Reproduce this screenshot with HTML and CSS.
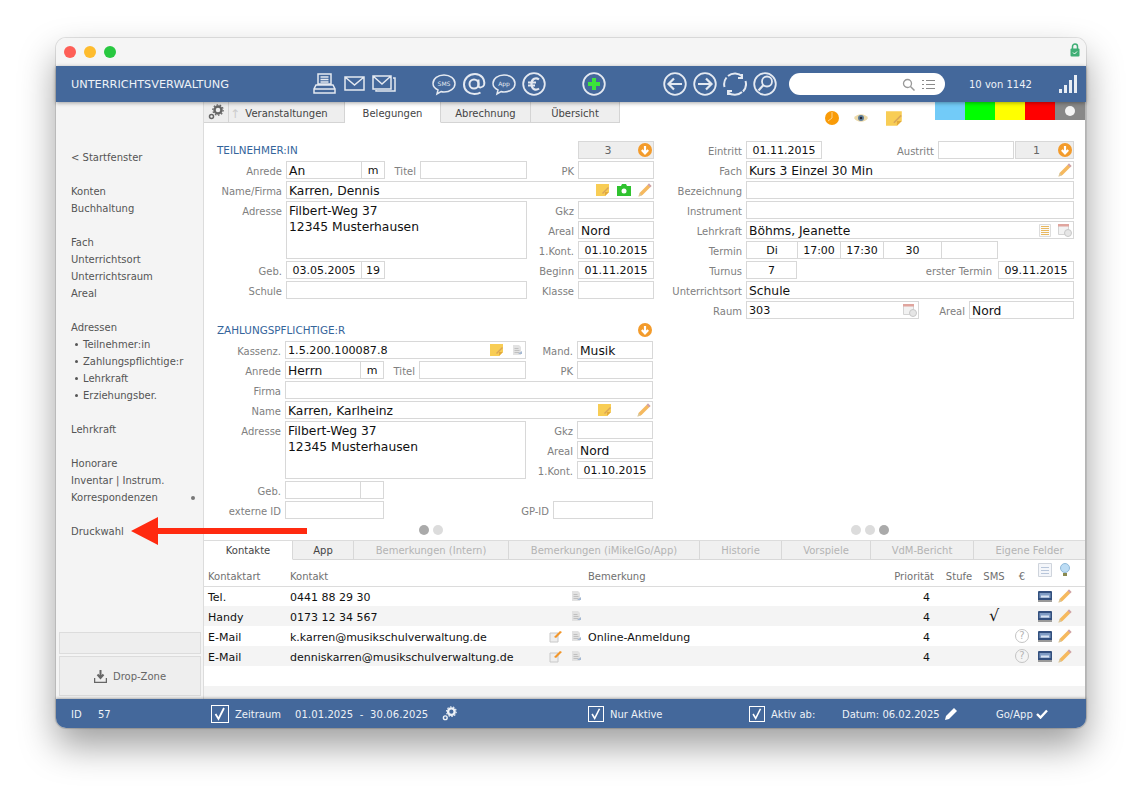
FILE: index.html
```html
<!DOCTYPE html>
<html lang="de">
<head>
    <meta charset="UTF-8">
    <title>Unterrichtsverwaltung</title>
    <link rel="stylesheet" href="styles.css">
</head>
<body>
    <svg class="defs" width="0" height="0">
        <symbol id="pencil" viewBox="0 0 14 14">
            <path d="M11 0.500l2.500 2.500-9 9-4 1.500 1.500-4z" fill="#f5b95f"/>
            <path d="M11 0.500l2.500 2.500-1.300 1.300-2.500-2.500z" fill="#c9a0b8"/>
            <path d="M1.500 10l2.500 2.500-3.500 1z" fill="#d8c8a0"/>
        </symbol>
        <symbol id="note" viewBox="0 0 14 14">
            <path d="M0 1h13v8l-4 4H0z" fill="#f8cd55"/>
            <path d="M13 9l-4 4V9z" fill="#e3a93a"/>
            <path d="M6 10l6-6 1 1-6 6z" fill="#d9a658"/>
        </symbol>
        <symbol id="doc" viewBox="0 0 11 11">
            <path d="M1 0h6l2 2v8H1z" fill="#e2e2e2"/>
            <path d="M2.500 3.500h4M2.500 5.500h5M2.500 7.500h5" stroke="#c0c0c0"/>
            <path d="M6 9l4-3v3z" fill="#a4b8d2"/>
        </symbol>
        <symbol id="pen-box" viewBox="0 0 13 13">
            <path d="M1 3h8v9H1z" fill="#eee" stroke="#c8c8c8"/>
            <path d="M5 7l6-6 2 1-6 6z" fill="#f2962a"/>
        </symbol>
        <symbol id="monitor" viewBox="0 0 14 11">
            <rect x="0" y="0" width="14" height="10" rx="1" fill="#33507e"/>
            <path d="M1.500 2h11v5h-11z" fill="#7f9cc4"/>
            <path d="M3 4.500h8v2H3z" fill="#d9e4f2"/>
            <path d="M0 9h14v2H0z" fill="#9a9a9a"/>
        </symbol>
        <symbol id="calendar" viewBox="0 0 14 14">
            <path d="M0.500 1.500h10v10h-10z" fill="#f2f2f2" stroke="#d4d4d4"/>
            <path d="M0 1h11v2.500H0z" fill="#e0a59e"/>
            <circle cx="10" cy="10" r="3.500" fill="#e6e6e6" stroke="#c8c8c8"/>
        </symbol>
        <symbol id="arrow-down" viewBox="0 0 14 14">
            <circle cx="7" cy="7" r="7" fill="#f39b2b"/>
            <path d="M7 3v7M3.800 7L7 10.300 10.200 7" fill="none" stroke="#fff" stroke-width="2.200"/>
        </symbol>
        <symbol id="gear" viewBox="0 0 16 16">
            <circle cx="10" cy="6" r="3.500" fill="none" stroke="currentColor" stroke-width="2.500"/>
            <circle cx="10" cy="6" r="5.200" fill="none" stroke="currentColor" stroke-width="1.200" stroke-dasharray="1.600 1.600"/>
            <circle cx="3.500" cy="12.500" r="2" fill="none" stroke="currentColor" stroke-width="1.500"/>
        </symbol>
    </svg>

    <div class="window">
        <div class="titlebar">
            <span class="light red"></span>
            <span class="light yellow"></span>
            <span class="light green"></span>
            <svg class="lock" width="10" height="14" viewBox="0 0 10 14">
                <path d="M2.500 6V3.500a2.500 2.500 0 0 1 5 0V6" fill="none" stroke="#3fae75" stroke-width="1.500"/>
                <rect x="0.500" y="5.500" width="9" height="8" rx="1" fill="#3fae75"/>
                <path d="M3 9.500l1.500 1.500L7 8.500" fill="none" stroke="#fff"/>
            </svg>
        </div>

        <div class="topbar">
            <div class="app-title">UNTERRICHTSVERWALTUNG</div>
            <div class="tools">
                <svg viewBox="0 0 24 24"><path d="M6 2h13v10H6zM8.500 5h8M8.500 7.500h8M8.500 10h8M4 13h17l2 4v4H2v-4zM2 17h21"/></svg>
                <svg viewBox="0 0 24 24"><path d="M3 5h19v13H3zM3 5l9.500 8L22 5"/></svg>
                <svg viewBox="0 0 24 24"><path d="M1 4h18v13H1zM1 4l9 8 9-8M21 6h2v13H4v-1"/></svg>
            </div>
            <div class="tools gap36">
                <svg viewBox="0 0 24 24"><path d="M12 3c6 0 11 3.500 11 8.500S18 20 12 20c-1 0-2 0-3-.5L5 22l1-4c-3-1.500-5-3.500-5-6.500C1 6.500 6 3 12 3z"/><text x="12" y="14" text-anchor="middle" class="bubble-text">SMS</text></svg>
                <svg viewBox="0 0 24 24"><circle class="thick" cx="12" cy="12" r="4.500"/><path class="thick" d="M16.500 7.500V14c0 2 4.500 2 5.500-1 1.500-6-3-11-9-11C7 2 2 6.500 2 12.500S7 22 12.500 22c2.500 0 4.500-.5 6-1.500"/></svg>
                <svg viewBox="0 0 24 24"><path d="M12 3c6 0 11 3.500 11 8.500S18 20 12 20c-1 0-2 0-3-.5L5 22l1-4c-3-1.500-5-3.500-5-6.500C1 6.500 6 3 12 3z"/><text x="12" y="14" text-anchor="middle" class="bubble-text">App</text></svg>
                <svg viewBox="0 0 24 24"><circle cx="12" cy="12" r="10.800"/><path class="heavy" d="M17 7.500c-3-2.500-7.500-1-7.500 4.500s4.500 7 7.500 4.500M6 10.500h8M6 13.500h7"/></svg>
            </div>
            <div class="tools gap36">
                <svg viewBox="0 0 24 24"><circle cx="12" cy="12" r="10.800"/><path d="M12 6v12M6 12h12" class="plus"/></svg>
            </div>
            <div class="tools gap57">
                <svg viewBox="0 0 24 24"><circle cx="12" cy="12" r="10.800"/><path class="heavy" d="M19 12H6M11 6.500L5.500 12l5.500 5.500"/></svg>
                <svg viewBox="0 0 24 24"><circle cx="12" cy="12" r="10.800"/><path class="heavy" d="M5 12h13M13 6.500l5.500 5.500-5.500 5.500"/></svg>
                <svg viewBox="0 0 24 24"><path class="thick" d="M5 4a10.800 10.800 0 0 1 14.500.5M19 2v4h-4M22.500 9a10.800 10.800 0 0 1-2.500 10.500M19 20a10.800 10.800 0 0 1-14 .5M5 23v-4h4M1.500 15A10.800 10.800 0 0 1 3.500 5.500"/></svg>
                <svg viewBox="0 0 24 24"><circle cx="12" cy="12" r="10.800"/><circle cx="14" cy="9.500" r="5"/><path class="heavy" d="M10.500 13L5.500 18.500"/></svg>
            </div>
            <div class="search">
                <svg width="13" height="13" viewBox="0 0 13 13"><circle cx="5.500" cy="5.500" r="4" fill="none" stroke="#999" stroke-width="1.300"/><path d="M8.500 8.500l4 4" stroke="#999" stroke-width="1.500"/></svg>
                <svg width="13" height="11" viewBox="0 0 13 11"><path d="M0 1.500h2M4 1.500h9M0 5.500h2M4 5.500h9M0 9.500h2M4 9.500h9" stroke="#8a8a8a"/></svg>
            </div>
            <div class="counter">10 von 1142</div>
            <svg class="signal" width="18" height="18" viewBox="0 0 18 18">
                <path d="M0 14h3v4H0zM5 10h3v8H5zM10 5h3v13h-3zM15 0h3v18h-3z" fill="#e8edf4"/>
            </svg>
        </div>

        <div class="content">
            <div class="sidebar">
                <div class="nav">
                    <div class="nav-group">&lt; Startfenster</div>
                    <div class="nav-group">
                        <div>Konten</div>
                        <div>Buchhaltung</div>
                    </div>
                    <div class="nav-group">
                        <div>Fach</div>
                        <div>Unterrichtsort</div>
                        <div>Unterrichtsraum</div>
                        <div>Areal</div>
                    </div>
                    <div class="nav-group">
                        <div>Adressen</div>
                        <div class="sub">Teilnehmer:in</div>
                        <div class="sub">Zahlungspflichtige:r</div>
                        <div class="sub">Lehrkraft</div>
                        <div class="sub">Erziehungsber.</div>
                    </div>
                    <div class="nav-group">Lehrkraft</div>
                    <div class="nav-group">
                        <div>Honorare</div>
                        <div>Inventar | Instrum.</div>
                        <div class="with-dot">Korrespondenzen<span class="nav-dot"></span></div>
                    </div>
                    <div class="nav-group">Druckwahl</div>
                </div>
                <div class="side-box"></div>
                <div class="drop-zone">
                    <svg width="13" height="13" viewBox="0 0 13 13"><path d="M6.500 0v7M3.500 4.500l3 3.500 3-3.500" fill="none" stroke="#666" stroke-width="2"/><path d="M0.500 8v4.500h12V8" fill="none" stroke="#666" stroke-width="1.500"/></svg>
                    Drop-Zone
                </div>
            </div>

            <div class="main">
                <div class="tabbar">
                    <div class="tab tab-gear"><svg width="16" height="16"><use href="#gear"/></svg></div>
                    <div class="tab tab-veranst"><span class="faint-arrow">↑</span>Veranstaltungen</div>
                    <div class="tab tab-active tab-beleg">Belegungen</div>
                    <div class="tab tab-abr">Abrechnung</div>
                    <div class="tab tab-uebers">Übersicht</div>
                    <div class="status-icons">
                        <svg width="14" height="14" viewBox="0 0 14 14"><circle cx="7" cy="7" r="7" fill="#f99b08"/><path d="M7 1v6L3 10" fill="none" stroke="#fde0ad" stroke-width="0.800"/></svg>
                        <svg class="eye" width="14" height="10" viewBox="0 0 14 10"><path d="M0 5c3-5 11-5 14 0-3 5-11 5-14 0z" fill="#ecd9a8"/><circle cx="7" cy="5" r="3" fill="#5f7f9a"/><circle cx="7" cy="5" r="1.300" fill="#223"/></svg>
                        <svg class="big-note" width="17" height="17"><use href="#note"/></svg>
                    </div>
                    <div class="swatches">
                        <span class="swatch sw-blue"></span>
                        <span class="swatch sw-green"></span>
                        <span class="swatch sw-yellow"></span>
                        <span class="swatch sw-red"></span>
                        <span class="swatch sw-grey"><i></i></span>
                    </div>
                </div>

                <div class="form">
                    <div class="col-left">
                        <div class="row">
                            <div class="section">TEILNEHMER:IN</div>
                            <div class="f grey w76 ctr push">3<svg class="f-arrow" width="14" height="14"><use href="#arrow-down"/></svg></div>
                        </div>
                        <div class="row">
                            <div class="lbl l81">Anrede</div>
                            <div class="f w76">An</div>
                            <div class="f w25 join ctr">m</div>
                            <div class="lbl l35">Titel</div>
                            <div class="f w107"></div>
                            <div class="lbl l51">PK</div>
                            <div class="f w76"></div>
                        </div>
                        <div class="row">
                            <div class="lbl l81">Name/Firma</div>
                            <div class="f w368">Karren, Dennis
                                <div class="f-icons">
                                    <svg width="14" height="14"><use href="#note"/></svg>
                                    <svg width="14" height="12" viewBox="0 0 14 12"><path d="M0 2h4l1-2h4l1 2h4v10H0z" fill="#2fc22f"/><circle cx="7" cy="7" r="2.500" fill="#fff"/></svg>
                                    <svg width="14" height="14"><use href="#pencil"/></svg>
                                </div>
                            </div>
                        </div>
                        <div class="addr">
                            <div class="lbl l81">Adresse</div>
                            <div class="f w241 area">Filbert-Weg 37<br>12345 Musterhausen</div>
                            <div class="addr-side">
                                <div class="row"><div class="lbl l51">Gkz</div><div class="f w76"></div></div>
                                <div class="row"><div class="lbl l51">Areal</div><div class="f w76">Nord</div></div>
                                <div class="row"><div class="lbl l51">1.Kont.</div><div class="f w76 ctr">01.10.2015</div></div>
                            </div>
                        </div>
                        <div class="row">
                            <div class="lbl l81">Geb.</div>
                            <div class="f w76 ctr">03.05.2005</div>
                            <div class="f w25 join ctr">19</div>
                            <div class="lbl l193">Beginn</div>
                            <div class="f w76 ctr">01.11.2015</div>
                        </div>
                        <div class="row">
                            <div class="lbl l81">Schule</div>
                            <div class="f w241"></div>
                            <div class="lbl l51">Klasse</div>
                            <div class="f w76"></div>
                        </div>

                        <div class="payer">
                            <div class="row">
                                <div class="section">ZAHLUNGSPFLICHTIGE:R</div>
                                <svg class="sec-arrow" width="14" height="14"><use href="#arrow-down"/></svg>
                            </div>
                            <div class="row">
                                <div class="lbl l81">Kassenz.</div>
                                <div class="f w241 text11">1.5.200.100087.8
                                    <div class="f-icons pr3">
                                        <svg width="14" height="14"><use href="#note"/></svg>
                                        <svg width="11" height="11"><use href="#doc"/></svg>
                                    </div>
                                </div>
                                <div class="lbl l51">Mand.</div>
                                <div class="f w76">Musik</div>
                            </div>
                            <div class="row">
                                <div class="lbl l81">Anrede</div>
                                <div class="f w76">Herrn</div>
                                <div class="f w25 join ctr">m</div>
                                <div class="lbl l35">Titel</div>
                                <div class="f w107"></div>
                                <div class="lbl l51">PK</div>
                                <div class="f w76"></div>
                            </div>
                            <div class="row">
                                <div class="lbl l81">Firma</div>
                                <div class="f w368"></div>
                            </div>
                            <div class="row">
                                <div class="lbl l81">Name</div>
                                <div class="f w368">Karren, Karlheinz
                                    <div class="f-icons wide">
                                        <svg width="14" height="14"><use href="#note"/></svg>
                                        <svg width="14" height="14"><use href="#pencil"/></svg>
                                    </div>
                                </div>
                            </div>
                            <div class="addr">
                                <div class="lbl l81">Adresse</div>
                                <div class="f w241 area">Filbert-Weg 37<br>12345 Musterhausen</div>
                                <div class="addr-side">
                                    <div class="row"><div class="lbl l51">Gkz</div><div class="f w76"></div></div>
                                    <div class="row"><div class="lbl l51">Areal</div><div class="f w76">Nord</div></div>
                                    <div class="row"><div class="lbl l51">1.Kont.</div><div class="f w76 ctr">01.10.2015</div></div>
                                </div>
                            </div>
                            <div class="row">
                                <div class="lbl l81">Geb.</div>
                                <div class="f w76"></div>
                                <div class="f w25 join"></div>
                            </div>
                            <div class="row">
                                <div class="lbl l81">externe ID</div>
                                <div class="f w99"></div>
                                <div class="lbl l169">GP-ID</div>
                                <div class="f w100"></div>
                            </div>
                        </div>
                        <div class="dots"><span class="dot on"></span><span class="dot"></span></div>
                    </div>

                    <div class="col-right">
                        <div class="row">
                            <div class="lbl l86">Eintritt</div>
                            <div class="f w76 ctr">01.11.2015</div>
                            <div class="lbl l116">Austritt</div>
                            <div class="f w76"></div>
                            <div class="f grey w59 ctr next">1<svg class="f-arrow" width="14" height="14"><use href="#arrow-down"/></svg></div>
                        </div>
                        <div class="row">
                            <div class="lbl l86">Fach</div>
                            <div class="f w328">Kurs 3 Einzel 30 Min
                                <div class="f-icons"><svg width="14" height="14"><use href="#pencil"/></svg></div>
                            </div>
                        </div>
                        <div class="row"><div class="lbl l86">Bezeichnung</div><div class="f w328"></div></div>
                        <div class="row"><div class="lbl l86">Instrument</div><div class="f w328"></div></div>
                        <div class="row">
                            <div class="lbl l86">Lehrkraft</div>
                            <div class="f w328">Böhms, Jeanette
                                <div class="f-icons">
                                    <svg width="12" height="13" viewBox="0 0 12 13"><path d="M0.500 0.500h11v12H0.500z" fill="#fafafa" stroke="#ddd"/><path d="M2 2.500h8M2 4.500h8M2 6.500h8M2 8.500h8M2 10.500h8" stroke="#e8b860"/></svg>
                                    <svg width="14" height="14"><use href="#calendar"/></svg>
                                </div>
                            </div>
                        </div>
                        <div class="row">
                            <div class="lbl l86">Termin</div>
                            <div class="f w52 ctr">Di</div>
                            <div class="f w44 join ctr">17:00</div>
                            <div class="f w44 join ctr">17:30</div>
                            <div class="f w59 join ctr">30</div>
                            <div class="f w57 join"></div>
                        </div>
                        <div class="row">
                            <div class="lbl l86">Turnus</div>
                            <div class="f w51 ctr">7</div>
                            <div class="lbl l201">erster Termin</div>
                            <div class="f w76 ctr">09.11.2015</div>
                        </div>
                        <div class="row"><div class="lbl l86">Unterrichtsort</div><div class="f w328">Schule</div></div>
                        <div class="row">
                            <div class="lbl l86">Raum</div>
                            <div class="f w173 text11">303
                                <div class="f-icons"><svg width="14" height="14"><use href="#calendar"/></svg></div>
                            </div>
                            <div class="lbl l50">Areal</div>
                            <div class="f w105">Nord</div>
                        </div>
                        <div class="dots dots-right"><span class="dot"></span><span class="dot"></span><span class="dot on"></span></div>
                    </div>
                </div>

                <div class="lower-tabs">
                    <div class="ltab lt-active lt1">Kontakte</div>
                    <div class="ltab lt2">App</div>
                    <div class="ltab off lt3">Bemerkungen (Intern)</div>
                    <div class="ltab off lt4">Bemerkungen (iMikelGo/App)</div>
                    <div class="ltab off lt5">Historie</div>
                    <div class="ltab off lt6">Vorspiele</div>
                    <div class="ltab off lt7">VdM-Bericht</div>
                    <div class="ltab off lt8">Eigene Felder</div>
                </div>

                <table class="contacts">
                    <colgroup>
                        <col class="c-art"><col class="c-kontakt"><col class="c-i1"><col class="c-i2"><col class="c-bem">
                        <col class="c-prio"><col class="c-stufe"><col class="c-sms"><col class="c-eur"><col class="c-mon"><col class="c-pen">
                    </colgroup>
                    <thead>
                        <tr>
                            <th>Kontaktart</th><th>Kontakt</th><th></th><th></th><th>Bemerkung</th>
                            <th class="num">Priorität</th><th class="mid stufe">Stufe</th><th class="mid">SMS</th><th class="mid">€</th>
                            <th class="mid top"><svg width="14" height="14" viewBox="0 0 14 14"><path d="M0.500 0.500h13v13h-13z" fill="#f4f6fa" stroke="#cfd4dc"/><path d="M3 4.500h8M3 7.500h8M3 10.500h8" stroke="#b8c6da"/></svg></th>
                            <th class="mid top"><svg width="10" height="14" viewBox="0 0 10 14"><circle cx="5" cy="5" r="4.500" fill="#bcdcf4" stroke="#8fb8d8"/><path d="M3 10h4v3H3z" fill="#8a8a50"/></svg></th>
                        </tr>
                    </thead>
                    <tbody>
                        <tr>
                            <td>Tel.</td><td>0441 88 29 30</td><td></td>
                            <td class="mid"><svg width="11" height="11"><use href="#doc"/></svg></td><td></td>
                            <td class="num">4</td><td></td><td></td><td></td>
                            <td class="mid"><svg width="14" height="11"><use href="#monitor"/></svg></td>
                            <td class="mid"><svg width="14" height="14"><use href="#pencil"/></svg></td>
                        </tr>
                        <tr>
                            <td>Handy</td><td>0173 12 34 567</td><td></td>
                            <td class="mid"><svg width="11" height="11"><use href="#doc"/></svg></td><td></td>
                            <td class="num">4</td><td></td><td class="mid check">√</td><td></td>
                            <td class="mid"><svg width="14" height="11"><use href="#monitor"/></svg></td>
                            <td class="mid"><svg width="14" height="14"><use href="#pencil"/></svg></td>
                        </tr>
                        <tr>
                            <td>E-Mail</td><td>k.karren@musikschulverwaltung.de</td>
                            <td class="mid"><svg width="13" height="13"><use href="#pen-box"/></svg></td>
                            <td class="mid"><svg width="11" height="11"><use href="#doc"/></svg></td><td>Online-Anmeldung</td>
                            <td class="num">4</td><td></td><td></td>
                            <td class="mid"><span class="help">?</span></td>
                            <td class="mid"><svg width="14" height="11"><use href="#monitor"/></svg></td>
                            <td class="mid"><svg width="14" height="14"><use href="#pencil"/></svg></td>
                        </tr>
                        <tr>
                            <td>E-Mail</td><td>denniskarren@musikschulverwaltung.de</td>
                            <td class="mid"><svg width="13" height="13"><use href="#pen-box"/></svg></td>
                            <td class="mid"><svg width="11" height="11"><use href="#doc"/></svg></td><td></td>
                            <td class="num">4</td><td></td><td></td>
                            <td class="mid"><span class="help">?</span></td>
                            <td class="mid"><svg width="14" height="11"><use href="#monitor"/></svg></td>
                            <td class="mid"><svg width="14" height="14"><use href="#pencil"/></svg></td>
                        </tr>
                        <tr><td colspan="11"></td></tr>
                    </tbody>
                </table>
                <div class="table-rest"></div>
            </div>

            <svg class="red-arrow" width="176" height="30" viewBox="0 0 176 30">
                <path d="M0 15L27 1v11h149v6H27v11z" fill="#ff2a10"/>
            </svg>
        </div>

        <div class="footer">
            <span class="ft-id">ID</span>
            <span class="ft-idval">57</span>
            <span class="box box-large"><svg viewBox="0 0 16 16"><path d="M3.500 8l3 5L12 2" fill="none" stroke="#fff" stroke-width="1.800"/></svg></span>
            <span class="ft-zeitraum">Zeitraum</span>
            <span class="ft-dates">01.01.2025&nbsp; - &nbsp;30.06.2025</span>
            <svg class="ft-gear" width="15" height="15"><use href="#gear"/></svg>
            <span class="box ft-box2"><svg viewBox="0 0 16 16"><path d="M3.500 8l3 5L12 2" fill="none" stroke="#fff" stroke-width="1.800"/></svg></span>
            <span class="ft-aktive">Nur Aktive</span>
            <span class="box ft-box3"><svg viewBox="0 0 16 16"><path d="M3.500 8l3 5L12 2" fill="none" stroke="#fff" stroke-width="1.800"/></svg></span>
            <span class="ft-abl">Aktiv ab:</span>
            <span class="ft-datum">Datum: 06.02.2025</span>
            <svg class="ft-pen" width="12" height="12" viewBox="0 0 12 12"><path d="M9 0l3 3-8 8-4 1 1-4z" fill="#fff"/></svg>
            <span class="ft-go">Go/App</span>
            <svg class="ft-ok" width="12" height="10" viewBox="0 0 12 10"><path d="M1 5l3.500 3.500L11 1.500" fill="none" stroke="#fff" stroke-width="2.400"/></svg>
        </div>
    </div>
</body>
</html>
```

FILE: styles.css
```css
* {
    box-sizing: border-box;
}

html, body {
    margin: 0;
    height: 100%;
}

body {
    background-color: #fff;
    padding: 38px 56px 0;
    font-family: "DejaVu Sans", Verdana, sans-serif;
    font-size: 10px;
    color: #555;
    overflow: hidden;
}

.defs {
    position: absolute;
}

.window {
    width: 1030px;
    height: 690px;
    display: flex;
    flex-direction: column;
    border-radius: 10px;
    background-color: #fff;
    box-shadow: 0 0 0 1px rgba(0, 0, 0, 0.1), 0 18px 36px rgba(0, 0, 0, 0.38);
}

/* title bar */
.titlebar {
    height: 28px;
    display: flex;
    align-items: center;
    gap: 8px;
    padding-left: 8px;
    padding-right: 6px;
    background-color: #f5f5f5;
    border-radius: 10px 10px 0 0;
}

.light {
    width: 12px;
    height: 12px;
    border-radius: 50%;
}

.red { background-color: #fe5f57; }
.yellow { background-color: #febc2e; }
.green { background-color: #28c840; }

.lock {
    margin-left: auto;
    margin-bottom: 5px;
}

/* blue bar */
.topbar {
    height: 36px;
    display: flex;
    align-items: center;
    background-color: #44689b;
    position: relative;
    z-index: 2;
    box-shadow: 0 1px 4px rgba(0, 0, 0, 0.35);
}

.app-title {
    width: 256px;
    padding-left: 15px;
    color: #eef2f7;
    font-size: 11.3px;
}

.tools {
    display: flex;
    gap: 6px;
}

.gap36 { margin-left: 36px; }
.gap57 { margin-left: 57px; }

.tools svg {
    width: 24px;
    height: 24px;
    fill: none;
    stroke: #e4e9f1;
    stroke-width: 1.500;
}

.tools svg circle { stroke-width: 1.800; }
.tools svg .thick { stroke-width: 2; }
.tools svg .heavy { stroke-width: 2.200; }
.tools svg .plus { stroke: #3be43b; stroke-width: 4; }

.bubble-text {
    font-size: 6px;
    fill: #e4e9f1;
    stroke: none;
    font-family: "DejaVu Sans", sans-serif;
}

.search {
    width: 156px;
    height: 22px;
    margin-left: 12px;
    display: flex;
    align-items: center;
    justify-content: flex-end;
    gap: 7px;
    padding-right: 10px;
    background-color: #fff;
    border-radius: 11px;
}

.counter {
    margin-left: 24px;
    color: #eef2f7;
    font-size: 10px;
}

.signal {
    margin-left: auto;
    margin-right: 9px;
}

/* content */
.content {
    flex: 1;
    display: flex;
    min-height: 0;
    position: relative;
}

.sidebar {
    width: 148px;
    flex-shrink: 0;
    display: flex;
    flex-direction: column;
    background-color: #f4f4f4;
    border-right: 1px solid #dcdcdc;
    padding: 47px 0 3px;
}

.nav {
    flex: 1;
    padding-left: 15px;
    line-height: 17px;
    color: #555;
}

.nav-group {
    margin-bottom: 17px;
}

.sub {
    padding-left: 12px;
    position: relative;
}

.sub::before {
    content: "";
    position: absolute;
    left: 4px;
    top: 7px;
    width: 3px;
    height: 3px;
    border-radius: 50%;
    background-color: #555;
}

.with-dot {
    display: flex;
    align-items: center;
}

.nav-dot {
    width: 4px;
    height: 4px;
    border-radius: 50%;
    background-color: #777;
    margin-left: auto;
    margin-right: 8px;
}

.side-box {
    height: 22px;
    margin: 0 2px 2px 3px;
    background-color: #eee;
    border: 1px solid #dcdcdc;
}

.drop-zone {
    height: 40px;
    margin: 0 2px 0 3px;
    display: flex;
    align-items: center;
    justify-content: center;
    gap: 6px;
    background-color: #eee;
    border: 1px solid #dcdcdc;
    color: #666;
}

.main {
    flex: 1;
    min-width: 0;
    display: flex;
    flex-direction: column;
    border-right: 1px solid #b4b4b4;
}

/* top tabs */
.tabbar {
    height: 21px;
    display: flex;
    flex-shrink: 0;
}

.tab {
    display: flex;
    align-items: center;
    justify-content: center;
    padding-top: 2px;
    background-color: #eee;
    border-right: 1px solid #d4d4d4;
    border-bottom: 1px solid #d4d4d4;
    color: #444;
}

.tab-gear { width: 25px; color: #666; padding-top: 0; }
.tab-veranst { width: 116px; position: relative; }
.tab-beleg { width: 96px; }
.tab-abr { width: 90px; }
.tab-uebers { width: 89px; }

.tab-active {
    background-color: #fff;
    border-bottom-color: #fff;
}

.faint-arrow {
    position: absolute;
    left: 1px;
    top: 5px;
    color: #ccc;
    font-size: 12px;
}

.status-icons {
    display: flex;
    align-items: flex-start;
    height: 21px;
    margin-left: 205px;
    padding-top: 9px;
}

.status-icons svg {
    flex-shrink: 0;
}

.eye {
    margin-left: 15px;
    margin-top: 2px;
}

.big-note {
    margin-left: 18px;
    margin-top: -1px;
}

.swatches {
    display: flex;
    height: 18px;
    margin-left: auto;
}

.swatch {
    width: 30px;
    display: flex;
    align-items: center;
    justify-content: center;
}

.sw-blue { background-color: #72cbf8; }
.sw-green { background-color: #00ff00; }
.sw-yellow { background-color: #ffff00; }
.sw-red { background-color: #ff0000; }
.sw-grey { background-color: #888; }

.swatch i {
    width: 10px;
    height: 10px;
    border-radius: 50%;
    background-color: #f4f4f4;
}

/* form */
.form {
    height: 417px;
    flex-shrink: 0;
    display: flex;
    padding: 18px 0 0 1px;
}

.col-left {
    width: 449px;
    margin-right: 6px;
    display: flex;
    flex-direction: column;
}

.col-right {
    width: 414px;
    display: flex;
    flex-direction: column;
}

.row {
    height: 18px;
    margin-bottom: 2px;
    display: flex;
    flex-shrink: 0;
}

.addr {
    height: 58px;
    margin-bottom: 2px;
    display: flex;
    flex-shrink: 0;
}

.addr-side {
    display: flex;
    flex-direction: column;
}

.section {
    padding-left: 12px;
    line-height: 18px;
    font-size: 10.4px;
    color: #35659b;
}

.payer .section {
    padding-left: 13px;
}

.lbl {
    flex-shrink: 0;
    text-align: right;
    padding-right: 4px;
    line-height: 22px;
    color: #808080;
    white-space: nowrap;
}

.l35 { width: 35px; }
.l50 { width: 50px; }
.l51 { width: 51px; }
.l81 { width: 81px; }
.l86 { width: 86px; }
.l116 { width: 116px; }
.l169 { width: 169px; }
.l193 { width: 193px; }
.l201 { width: 201px; padding-right: 6px; }

/* field box, dates and short values use the smaller size */
.f {
    flex-shrink: 0;
    height: 18px;
    display: flex;
    align-items: center;
    padding: 2px 0 0 2px;
    border: 1px solid #d8d8d8;
    background-color: #fff;
    color: #111;
    font-size: 12.3px;
    line-height: 14px;
    white-space: pre-line;
}

.area {
    height: 58px;
    display: block;
    line-height: 16px;
    padding-top: 1px;
}

.ctr {
    justify-content: center;
    padding-left: 0;
    font-size: 11px;
}

.text11 {
    font-size: 11.2px;
}

.join { margin-left: -1px; }
.next { margin-left: 1px; }
.push { margin-left: auto; }

.grey {
    background-color: #eee;
    color: #666;
    position: relative;
    padding-right: 16px;
}

.f-arrow {
    position: absolute;
    right: 1px;
    top: 1px;
}

.sec-arrow {
    margin-left: auto;
    margin-top: 2px;
    margin-right: 2px;
}

.w25 { width: 24px; }
.w44 { width: 44px; }
.w51 { width: 51px; }
.w52 { width: 52px; }
.w57 { width: 57px; }
.w59 { width: 59px; }
.w76 { width: 76px; }
.w99 { width: 99px; }
.w100 { width: 100px; }
.w105 { width: 105px; }
.w107 { width: 107px; }
.w173 { width: 173px; }
.w241 { width: 241px; }
.w328 { width: 328px; }
.w368 { width: 368px; }

.f-icons {
    margin-left: auto;
    margin-top: -2px;
    display: flex;
    align-items: center;
    gap: 7px;
    padding-right: 1px;
}

.pr3 {
    gap: 8px;
    padding-right: 2px;
}

.wide {
    gap: 25px;
    padding-right: 1px;
}

.payer {
    margin-left: -1px;
    margin-top: 20px;
}

.dots {
    margin-top: auto;
    margin-bottom: 5px;
    display: flex;
    justify-content: center;
    gap: 4px;
    padding-left: 3px;
}

.dots-right { padding-left: 6px; }

.dot {
    width: 10px;
    height: 10px;
    border-radius: 50%;
    background-color: #dcdcdc;
}

.dot.on {
    background-color: #aaa;
}

/* lower tabs */
.lower-tabs {
    height: 20px;
    flex-shrink: 0;
    display: flex;
    border-top: 1px solid #dcdcdc;
}

.ltab {
    display: flex;
    align-items: center;
    justify-content: center;
    background-color: #f0f0f0;
    border-right: 1px solid #d8d8d8;
    border-bottom: 1px solid #d8d8d8;
    color: #444;
}

.lt-active {
    background-color: #fff;
    border-bottom-color: #fff;
}

.off { color: #b4b4b4; }

.lt1 { width: 89px; }
.lt2 { width: 61px; }
.lt3 { width: 155px; }
.lt4 { width: 191px; }
.lt5 { width: 82px; }
.lt6 { width: 89px; }
.lt7 { width: 103px; }
.lt8 { flex: 1; border-right: none; }

/* contact table */
.contacts {
    width: 881px;
    table-layout: fixed;
    border-collapse: collapse;
    flex-shrink: 0;
}

.c-art { width: 86px; }
.c-kontakt { width: 255px; }
.c-i1 { width: 20px; }
.c-i2 { width: 23px; }
.c-bem { width: 294px; }
.c-prio { width: 52px; }
.c-stufe { width: 44px; }
.c-sms { width: 32px; }
.c-eur { width: 24px; }
.c-mon { width: 22px; }
.c-pen { width: 29px; }

.contacts th {
    height: 26px;
    padding: 7px 0 0 0;
    font-weight: normal;
    text-align: left;
    color: #707070;
    border-bottom: 1px solid #dcdcdc;
    white-space: nowrap;
}

.contacts td {
    height: 20px;
    padding: 0;
    color: #111;
    font-size: 11px;
    white-space: nowrap;
}

.contacts td:not(.mid) {
    padding-top: 2px;
}

.contacts th:first-child,
.contacts td:first-child {
    padding-left: 4px;
}

.contacts th:last-child,
.contacts td:last-child {
    padding-right: 11px;
}

.contacts tbody tr:nth-child(even) {
    background-color: #f4f4f4;
}

.contacts th.num,
.contacts td.num {
    text-align: right;
}

.contacts td.num {
    padding-right: 4px;
}

.contacts th.mid,
.contacts td.mid {
    text-align: center;
    line-height: 0;
}

.contacts th.mid:not(.top) {
    line-height: normal;
}

.contacts th.stufe {
    padding-left: 6px;
}

.contacts th.top {
    padding-top: 0;
    padding-bottom: 6px;
}

.contacts td.check {
    font-size: 16px;
    line-height: 1;
}

.contacts svg {
    vertical-align: middle;
}

.help {
    display: inline-block;
    width: 14px;
    height: 14px;
    border: 1px solid #c4c4c4;
    border-radius: 50%;
    font-size: 10px;
    line-height: 12px;
    color: #b4b4b4;
    vertical-align: middle;
}

.table-rest {
    flex: 1;
    background-color: #f3f3f3;
}

.red-arrow {
    position: absolute;
    left: 75px;
    top: 414px;
    z-index: 3;
}

/* footer */
.footer {
    height: 29px;
    flex-shrink: 0;
    display: flex;
    align-items: center;
    background-color: #44689b;
    color: #eef2f7;
    border-radius: 0 0 10px 10px;
    box-shadow: 0 -1px 3px rgba(0, 0, 0, 0.3);
    position: relative;
    z-index: 2;
}

.footer span:not(.box) {
    padding-top: 2px;
}

.box {
    width: 16px;
    height: 16px;
    flex-shrink: 0;
    border: 1px solid #fff;
    display: flex;
}

.box-large {
    width: 18px;
    height: 18px;
}

.ft-id { margin-left: 15px; width: 27px; }
.ft-idval { width: 113px; }
.ft-zeitraum { margin-left: 6px; width: 60px; }
.ft-dates { width: 147px; white-space: nowrap; letter-spacing: 0.1px; }
.ft-gear { flex-shrink: 0; }
.ft-box2 { margin-left: 131px; }
.ft-aktive { margin-left: 6px; width: 139px; }
.ft-abl { margin-left: 6px; width: 71px; }
.ft-datum { width: 103px; white-space: nowrap; }
.ft-pen { flex-shrink: 0; }
.ft-go { margin-left: 39px; width: 40px; }
.ft-ok { flex-shrink: 0; }
```
